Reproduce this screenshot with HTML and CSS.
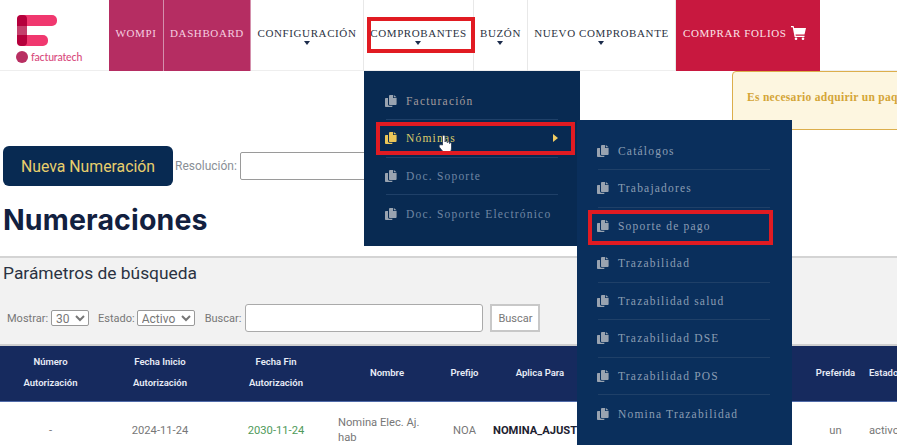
FILE: index.html
```html
<!DOCTYPE html>
<html lang="es">
<head>
<meta charset="utf-8">
<title>Numeraciones</title>
<link rel="stylesheet" href="styles.css">
</head>
<body>
<svg class="defs" width="0" height="0" aria-hidden="true">
  <symbol id="copy" viewBox="0 0 12 12">
    <path d="M4 1.2C4 .6 4.5 0 5.2 0H8v3h3.6v6c0 .6-.5 1-1 1H5c-.6 0-1-.4-1-1z" fill="currentColor"/>
    <path d="M8.8 0l2.8 2.3H8.8z" fill="currentColor"/>
    <path d="M3 3H1C.5 3 0 3.400 0 4v7c0 .6.500 1 1 1h5.500c.5 0 1-.4 1-1v-.3H4.500C3.600 10.700 3 10 3 9.200z" fill="currentColor"/>
  </symbol>
</svg>
<header class="topbar">
  <a class="logo" href="#">
    <svg class="logo-mark" width="44" height="36" viewBox="0 0 44 36">
      <rect x="1" y="0" width="40" height="11" rx="5" fill="#f0386f"/>
      <rect x="1" y="20" width="31" height="11" rx="5" fill="#f0386f"/>
      <rect x="1" y="0" width="10" height="31" rx="4" fill="#b5003c"/>
      <rect x="1" y="11" width="10" height="9" fill="#c4406c"/>
    </svg>
    <span class="logo-row"><i class="logo-dot"></i><span class="logo-text">facturatech</span></span>
  </a>
  <nav class="menu">
    <a class="tab tab-pink tab-wompi" href="#">WOMPI</a>
    <a class="tab tab-pink tab-dash" href="#">DASHBOARD</a>
    <a class="tab tab-conf caret" href="#">CONFIGURACIÓN</a>
    <div class="tab tab-comp caret">
      COMPROBANTES
      <span class="mark mark-tab"></span>
      <ul class="drop drop-main">
        <li class="drop-item"><svg class="ico"><use href="#copy"/></svg>Facturación</li>
        <li class="drop-item is-active"><svg class="ico"><use href="#copy"/></svg>Nóminas<i class="arrow"></i>
          <span class="mark mark-nom"></span>
          <svg class="hand" width="16" height="20" viewBox="0 0 16 20">
            <path d="M4.500 11V2.500c0-1.800 2.500-1.800 2.500 0V8c0-1.300 2.300-1.300 2.300 0v.7c0-1.200 2.200-1.200 2.200.1v.7c0-1 2-1 2 .3v4.200c0 2-.8 3-1.500 4.500H5.500C4.500 16.500 1 13.500 1 12c0-1.500 2-1.500 3.500-1z" fill="#fff" stroke="#24324a" stroke-width=".8"/>
          </svg>
          <ul class="drop drop-sub">
            <li class="drop-item"><svg class="ico"><use href="#copy"/></svg>Catálogos</li>
            <li class="drop-item"><svg class="ico"><use href="#copy"/></svg>Trabajadores</li>
            <li class="drop-item"><svg class="ico"><use href="#copy"/></svg>Soporte de pago<span class="mark mark-sop"></span></li>
            <li class="drop-item"><svg class="ico"><use href="#copy"/></svg>Trazabilidad</li>
            <li class="drop-item"><svg class="ico"><use href="#copy"/></svg>Trazabilidad salud</li>
            <li class="drop-item"><svg class="ico"><use href="#copy"/></svg>Trazabilidad DSE</li>
            <li class="drop-item"><svg class="ico"><use href="#copy"/></svg>Trazabilidad POS</li>
            <li class="drop-item"><svg class="ico"><use href="#copy"/></svg>Nomina Trazabilidad</li>
          </ul>
        </li>
        <li class="drop-item is-dim"><svg class="ico"><use href="#copy"/></svg>Doc. Soporte</li>
        <li class="drop-item is-dim"><svg class="ico"><use href="#copy"/></svg>Doc. Soporte Electrónico</li>
      </ul>
    </div>
    <a class="tab tab-buzon caret" href="#">BUZÓN</a>
    <a class="tab tab-nuevo caret" href="#">NUEVO COMPROBANTE</a>
    <a class="tab tab-buy" href="#">COMPRAR FOLIOS
      <svg class="cart" width="15" height="14" viewBox="0 0 15 14">
        <path d="M0 0h2.600l.5 2H15l-1.500 6.500H4.500l.3 1.300h8.700v1.200H3.600L1.700 1.200H0z" fill="#fff"/>
        <circle cx="5" cy="12.700" r="1.300" fill="#fff"/><circle cx="12" cy="12.700" r="1.300" fill="#fff"/>
      </svg>
    </a>
  </nav>
</header>
<main class="page">
  <div class="alert-row">
    <div class="alert">Es necesario adquirir un paquete de folios para continuar emitiendo</div>
  </div>
  <div class="toolbar">
    <button class="btn-new" type="button">Nueva Numeración</button>
    <label class="res-label" for="res">Resolución:</label>
    <input class="res-input" id="res" type="text">
  </div>
  <h1 class="title">Numeraciones</h1>
  <section class="panel">
    <h2 class="panel-title">Parámetros de búsqueda</h2>
    <form class="filters">
      <label class="flabel" for="show">Mostrar:</label>
      <select class="sel sel-show" id="show"><option>30</option></select>
      <label class="flabel flabel-gap" for="est">Estado:</label>
      <select class="sel sel-est" id="est"><option>Activo</option></select>
      <label class="flabel flabel-gap2" for="q">Buscar:</label>
      <input class="search" id="q" type="text">
      <button class="btn-search" type="button">Buscar</button>
    </form>
  </section>
  <table class="grid">
    <colgroup>
      <col class="c1"><col class="c2"><col class="c3"><col class="c4"><col class="c5"><col class="c6"><col class="c7"><col class="c8"><col class="c9">
    </colgroup>
    <thead>
      <tr>
        <th>Número<br>Autorización</th>
        <th>Fecha Inicio<br>Autorización</th>
        <th>Fecha Fin<br>Autorización</th>
        <th>Nombre</th>
        <th>Prefijo</th>
        <th>Aplica Para</th>
        <th></th>
        <th>Preferida</th>
        <th class="left">Estado</th>
      </tr>
    </thead>
    <tbody>
      <tr>
        <td>-</td>
        <td>2024-11-24</td>
        <td class="green">2030-11-24</td>
        <td class="left name">Nomina Elec. Aj. hab</td>
        <td>NOA</td>
        <td class="strong">NOMINA_AJUSTE</td>
        <td></td>
        <td>un</td>
        <td class="left">activo</td>
      </tr>
    </tbody>
  </table>
</main>
</body>
</html>
```
FILE: styles.css
```css
* { box-sizing: border-box; }
html, body { margin: 0; height: 100%; overflow: hidden; }
body { background: #fff; font-family: Roboto, "Liberation Sans", sans-serif; color: #555; width: 897px; height: 445px; }
.defs { position: absolute; }

/* top bar */
.topbar { display: flex; height: 71px; background: #fff; border-bottom: 1px solid #eee; }
.logo { width: 109px; flex: none; padding: 15px 0 0 16px; text-decoration: none; display: block; }
.logo-mark { display: block; }
.logo-row { display: flex; align-items: center; gap: 3px; }
.logo-dot { width: 12px; height: 12px; border-radius: 50%; background: #b82f62; }
.logo-text { font: 500 10.500px/12px Lato, sans-serif; color: #d84a7c; letter-spacing: -.15px; }

.menu { display: flex; height: 71px; font-family: "Liberation Serif", serif; font-size: 11px; letter-spacing: .6px; }
.tab { position: relative; display: flex; align-items: center; justify-content: center; height: 71px; padding-bottom: 5px; color: #2b3242; text-decoration: none; white-space: nowrap; border-right: 1px solid #e8e8e8; }
.tab-pink { background: #b52d62; color: #f6cfe0; border-right: 1px solid #d490ac; }
.tab-wompi { width: 55px; }
.tab-dash { width: 87px; }
.tab-conf { width: 113px; }
.tab-comp { width: 110px; }
.tab-buzon { width: 54px; }
.tab-nuevo { width: 148px; }
.tab-buy { width: 144px; background: #c8183f; color: #fbe3e8; border: 0; justify-content: flex-start; gap: 5px; padding-left: 7px; }
.caret::after { content: ""; position: absolute; left: 50%; top: 41px; margin-left: -3.500px; border: 3.500px solid transparent; border-bottom: 0; border-top: 4px solid #1c2c4c; }
.cart { display: block; }

/* annotation boxes drawn on the screenshot */
.mark { position: absolute; border: 4px solid #e11b22; pointer-events: none; z-index: 5; }
.mark-tab { left: 3px; top: 17px; width: 108px; height: 36px; }
.mark-nom { left: -10px; top: 2px; width: 199px; height: 33px; }
.mark-sop { left: -10px; top: 2px; width: 185px; height: 35px; }

/* dropdowns */
.drop { list-style: none; margin: 0; position: absolute; font-size: 11.500px; letter-spacing: 1.200px; }
.drop-main { left: 0; top: 71px; width: 216px; height: 175px; padding: 11.500px 0 0; background: #082a52; z-index: 3; }
.drop-sub { left: 191px; top: 0; width: 215px; height: 325px; padding: 12.500px 0 0; background: #0a2f5c; z-index: 4; }
.drop-item { position: relative; display: flex; align-items: center; height: 37.500px; margin: 0 22px; color: #8b9db3; border-bottom: 1px solid #1f4068; white-space: nowrap; }
.drop-sub .drop-item { margin: 0 22px 0 21px; }
.drop-main > .drop-item { color: #a29a9c; }
.drop-main > .drop-item:last-child, .drop-sub > .drop-item:last-child { border-bottom: 0; }
.drop-main > .drop-item.is-dim { color: #6f86a3; }
.drop-main > .drop-item.is-active { color: #dcca6a; }
.ico { width: 12px; height: 12px; margin: 0 9px 0 -1px; flex: none; color: #99a3b0; }
.is-active > .ico { color: #eac558; }
.arrow { position: absolute; right: 0; top: 14px; border: 4.500px solid transparent; border-right: 0; border-left: 5.500px solid #f2cd63; }
.hand { position: absolute; left: 52px; top: 14px; z-index: 2; }

/* page */
.alert-row { display: flex; height: 75px; padding-left: 732px; overflow: hidden; }
.alert { flex: none; width: 420px; height: 59px; padding: 17px 14px; background: #fdf6e0; border: 1px solid #dcae4c; border-radius: 4px; font: bold 11.500px/16px "Liberation Serif", serif; color: #d4a537; letter-spacing: .3px; white-space: nowrap; }

.toolbar { display: flex; align-items: center; height: 40px; padding-left: 3px; }
.btn-new { width: 170px; height: 40px; background: #082a52; border: 0; border-radius: 6px; color: #e8cf6c; font: 400 15.800px Roboto, sans-serif; padding: 0; }
.res-label { margin-left: 2px; font-size: 12px; color: #8a8f96; }
.res-input { margin-left: 3px; width: 140px; height: 28px; border: 1px solid #9a9a9a; border-radius: 2px; background: #fff; }

.title { margin: 0; height: 70px; padding: 17px 0 0 3px; font: bold 28.500px/34px Inter, Lato, sans-serif; color: #12203f; letter-spacing: .15px; }

.panel { height: 90px; padding: 5px 0 0 3px; background: #f2f2f2; border-top: 2px solid #d4d4d4; border-bottom: 2px solid #cfcfcf; }
.panel-title { margin: 0; font: 400 17.400px/20px Roboto, sans-serif; color: #2a3242; }
.filters { display: flex; align-items: center; margin-top: 21px; padding-left: 4px; height: 28px; }
.flabel { font-size: 11px; color: #777; margin-right: 2px; }
.flabel-gap { margin-left: 9px; }
.flabel-gap2 { margin-left: 10px; }
.sel { height: 16px; font: 12px Roboto, sans-serif; color: #777; background: #fff; border: 1px solid #999; border-radius: 2px; padding: 0; }
.sel-show { width: 38px; margin-left: 1px; }
.sel-est { width: 58px; }
.search { width: 238px; height: 28px; border: 1px solid #aaa; border-radius: 3px; background: #fff; margin-left: 2px; }
.btn-search { margin-left: 7px; width: 50px; height: 28px; background: #fff; border: 2px solid #c8c8c8; font: 11px Roboto, sans-serif; color: #777; padding: 0; }

.grid { width: 930px; table-layout: fixed; border-collapse: collapse; }
.c1 { width: 101px; } .c2 { width: 118px; } .c3 { width: 114px; } .c4 { width: 108px; } .c5 { width: 47px; } .c6 { width: 104px; } .c7 { width: 218px; } .c8 { width: 51px; } .c9 { width: 69px; }
.grid th { height: 55px; background: #162a5e; color: #e8ecf6; font: 600 9.500px/21px Roboto, sans-serif; text-align: center; padding: 0 0 2px; border-bottom: 1px solid #4f6aa8; white-space: nowrap; }
.grid td { height: 58px; font: 400 11.200px/15px Roboto, sans-serif; color: #777; text-align: center; padding: 0; background: #fff; }
.grid th.left { text-align: left; padding-left: 8px; }
.grid td.left { text-align: left; padding-left: 8px; }
.grid td.name { padding: 0 20px 0 5px; }
.grid td.green { color: #4f9a5a; }
.grid td.strong { font-weight: 700; color: #1d2230; text-align: left; padding-left: 5px; white-space: nowrap; overflow: hidden; }
```
